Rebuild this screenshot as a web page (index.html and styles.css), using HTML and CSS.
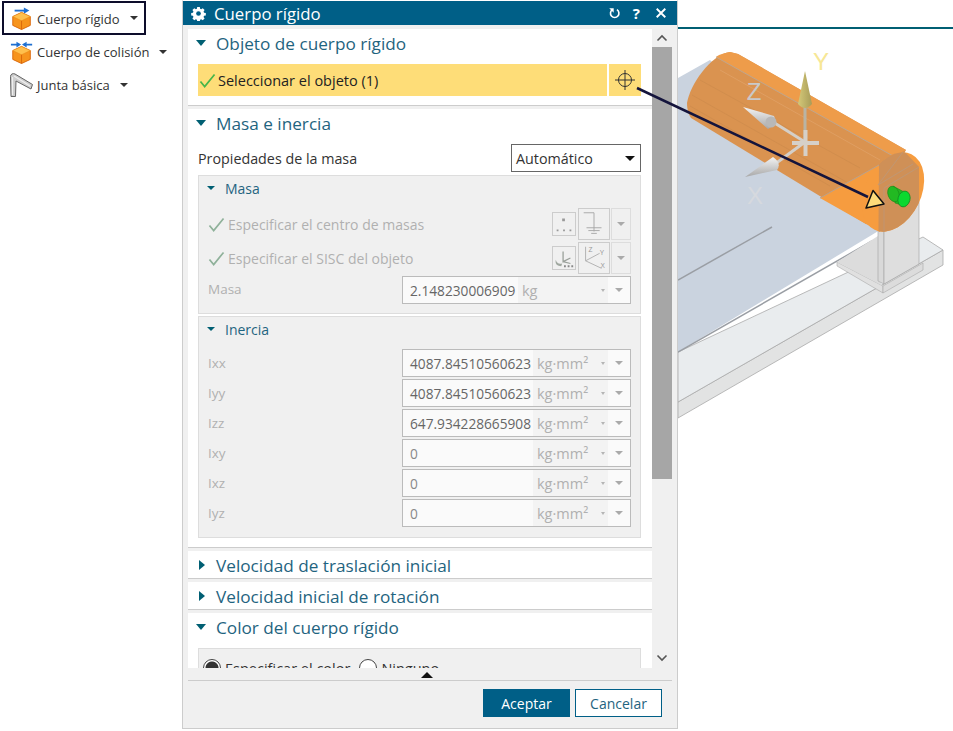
FILE: index.html
```html
<!DOCTYPE html>
<html>
<head>
    <title>Cuerpo rígido</title>
    <link rel="stylesheet" href="styles.css">
</head>
<body>
<div class="page">

    <!-- barra de comandos -->
    <div class="toolbar">
        <div class="tool tool-active">
            <svg class="tool-icon" viewBox="0 0 26 26">
                <path d="M5 5h11" stroke="#1f6fd0" stroke-width="2" fill="none"/>
                <path d="M15 1.5l6 3.500-6 3.500z" fill="#1f6fd0"/>
                <path d="M12.5 7l9.500 4.500v9.500l-9.500 4.500-9.500-4.500v-9.500z" fill="#f7941d" stroke="#d9660a"/>
                <path d="M12.5 7l9.500 4.500-9.500 4.500-9.500-4.500z" fill="#ffc04d" stroke="#e98a17" stroke-width=".6"/>
                <path d="M12.5 16v9.500" stroke="#d9660a"/>
            </svg>
            <span>Cuerpo rígido</span>
            <i class="tool-caret"></i>
        </div>
        <div class="tool">
            <svg class="tool-icon" viewBox="0 0 26 26">
                <path d="M1 5h9M24 5h-9" stroke="#1f6fd0" stroke-width="2" fill="none"/>
                <path d="M7 2l5 3-5 3zM18 2l-5 3 5 3z" fill="#1f6fd0"/>
                <path d="M12.5 7l9.500 4.500v9.500l-9.500 4.500-9.500-4.500v-9.500z" fill="#f7941d" stroke="#d9660a"/>
                <path d="M12.5 7l9.500 4.500-9.500 4.500-9.500-4.500z" fill="#ffc04d" stroke="#e98a17" stroke-width=".6"/>
                <path d="M12.5 16v9.500" stroke="#d9660a"/>
            </svg>
            <span>Cuerpo de colisión</span>
            <i class="tool-caret"></i>
        </div>
        <div class="tool">
            <svg class="tool-icon" viewBox="0 0 24 24">
                <path d="M0.500 3.500c0-2.500 2.500-3.500 4.500-2.500l17.500 10.500-1.500 4.500-15-8-.5 15.500h-4.500z" fill="#cdcdcd" stroke="#666"/>
                <path d="M2.500 4v18M4 3l16 10" stroke="#efefef" stroke-width="1.200"/>
            </svg>
            <span>Junta básica</span>
            <i class="tool-caret"></i>
        </div>
    </div>

    <!-- dialogo -->
    <div class="dialog">
        <div class="title-bar">
            <svg class="gear" viewBox="0 0 16 16">
                <path d="M6.600 1h2.800l.3 1.900 1.200.5 1.600-1.100 2 2-1.100 1.600.5 1.200 1.900.3v2.800l-1.900.3-.5 1.200 1.100 1.600-2 2-1.600-1.100-1.200.5-.3 1.900h-2.800l-.3-1.900-1.200-.5-1.600 1.100-2-2 1.100-1.600-.5-1.200-1.900-.3v-2.800l1.900-.3.5-1.200-1.100-1.600 2-2 1.600 1.100 1.200-.5z" fill="#fff"/>
                <circle cx="8" cy="8" r="2.500" fill="#005f87"/>
            </svg>
            <span class="title-text">Cuerpo rígido</span>
            <svg class="title-btn" viewBox="0 0 16 16">
                <path d="M5.500 3.300a5.200 5.200 0 1 0 5.500 0" fill="none" stroke="#fff" stroke-width="2"/>
                <path d="M1.500 1.500h5.500v5.500z" fill="#fff"/>
            </svg>
            <span class="title-help">?</span>
            <svg class="title-btn title-close" viewBox="0 0 14 14">
                <path d="M2 2l10 10M12 2l-10 10" stroke="#fff" stroke-width="2.200"/>
            </svg>
        </div>

        <div class="dialog-body">
            <div class="panel">

                <div class="section section-first">
                    <div class="section-head"><i class="caret-down"></i>Objeto de cuerpo rígido</div>
                    <div class="pick-row">
                        <div class="pick-label">
                            <svg class="check" viewBox="0 0 18 16"><path d="M1.500 9l4.500 5.500 10.500-13" fill="none" stroke="#46b54a" stroke-width="1.800"/></svg>
                            Seleccionar el objeto (1)
                        </div>
                        <div class="pick-btn">
                            <svg viewBox="0 0 22 22" width="22" height="22">
                                <circle cx="11" cy="11" r="6.500" fill="none" stroke="#333"/>
                                <path d="M11 1v20M1 11h20" stroke="#333"/>
                            </svg>
                        </div>
                    </div>
                </div>

                <div class="section section-mass">
                    <div class="section-head"><i class="caret-down"></i>Masa e inercia</div>
                    <div class="prop-row">
                        <span>Propiedades de la masa</span>
                        <div class="select-box">Automático<i class="caret-black"></i></div>
                    </div>

                    <div class="group group-masa">
                        <div class="group-head"><i class="caret-small"></i>Masa</div>
                        <div class="spec-row">
                            <svg class="check-gray" viewBox="0 0 18 16"><path d="M1.500 9l4.500 5.500 10.500-13" fill="none" stroke="#8fb19a" stroke-width="1.800"/></svg>
                            <span class="spec-text">Especificar el centro de masas</span>
                            <div class="mini-btn">
                                <svg viewBox="0 0 24 24" width="22" height="22"><path d="M10 6h3v3h-3zM4 18h2v2h-2zM11 18h2v2h-2zM18 18h2v2h-2z" fill="#999"/></svg>
                            </div>
                            <div class="big-btn">
                                <svg viewBox="0 0 32 32" width="30" height="30"><path d="M5 4h11v20M8 20h16M10 23h12M13 26h6" fill="none" stroke="#a8a8a8"/></svg>
                            </div>
                            <div class="drop-btn"><i class="caret-gray"></i></div>
                        </div>
                        <div class="spec-row">
                            <svg class="check-gray" viewBox="0 0 18 16"><path d="M1.500 9l4.500 5.500 10.500-13" fill="none" stroke="#8fb19a" stroke-width="1.800"/></svg>
                            <span class="spec-text">Especificar el SISC del objeto</span>
                            <div class="mini-btn">
                                <svg viewBox="0 0 24 24" width="22" height="22"><path d="M11 5v11l8-4M11 16l8 2" fill="none" stroke="#9aa09a" stroke-width="1.400"/><path d="M3 14c1 4 4 5 7 4l-1 3c-4 0-7-2-6-7z" fill="#a0a8a0"/><path d="M12 20h2v2h-2zM16 20h2v2h-2zM20 20h2v2h-2z" fill="#888"/></svg>
                            </div>
                            <div class="big-btn">
                                <svg viewBox="0 0 32 32" width="30" height="30"><path d="M7 4v15l17 8M7 19l15-8" fill="none" stroke="#b0b0b0"/><text x="10" y="10" class="csys-label">Z</text><text x="22" y="13" class="csys-label">Y</text><text x="23" y="27" class="csys-label">X</text></svg>
                            </div>
                            <div class="drop-btn"><i class="caret-gray"></i></div>
                        </div>
                        <div class="field-row field-row-masa">
                            <span class="field-name">Masa</span>
                            <div class="field">
                                <span class="field-value field-value-masa">2.148230006909</span>
                                <span class="field-unit field-unit-masa">kg<i class="caret-tiny"></i></span>
                                <span class="field-drop"><i class="caret-gray"></i></span>
                            </div>
                        </div>
                    </div>

                    <div class="group group-inercia">
                        <div class="group-head"><i class="caret-small"></i>Inercia</div>
                        <div class="field-list">
                            <div class="field-row">
                                <span class="field-name">Ixx</span>
                                <div class="field"><span class="field-value">4087.84510560623</span><span class="field-unit">kg·mm²<i class="caret-tiny"></i></span><span class="field-drop"><i class="caret-gray"></i></span></div>
                            </div>
                            <div class="field-row">
                                <span class="field-name">Iyy</span>
                                <div class="field"><span class="field-value">4087.84510560623</span><span class="field-unit">kg·mm²<i class="caret-tiny"></i></span><span class="field-drop"><i class="caret-gray"></i></span></div>
                            </div>
                            <div class="field-row">
                                <span class="field-name">Izz</span>
                                <div class="field"><span class="field-value">647.934228665908</span><span class="field-unit">kg·mm²<i class="caret-tiny"></i></span><span class="field-drop"><i class="caret-gray"></i></span></div>
                            </div>
                            <div class="field-row">
                                <span class="field-name">Ixy</span>
                                <div class="field"><span class="field-value field-zero">0</span><span class="field-unit">kg·mm²<i class="caret-tiny"></i></span><span class="field-drop"><i class="caret-gray"></i></span></div>
                            </div>
                            <div class="field-row">
                                <span class="field-name">Ixz</span>
                                <div class="field"><span class="field-value field-zero">0</span><span class="field-unit">kg·mm²<i class="caret-tiny"></i></span><span class="field-drop"><i class="caret-gray"></i></span></div>
                            </div>
                            <div class="field-row">
                                <span class="field-name">Iyz</span>
                                <div class="field"><span class="field-value field-zero">0</span><span class="field-unit">kg·mm²<i class="caret-tiny"></i></span><span class="field-drop"><i class="caret-gray"></i></span></div>
                            </div>
                        </div>
                    </div>
                </div>

                <div class="section section-closed">
                    <div class="section-head"><i class="caret-right"></i>Velocidad de traslación inicial</div>
                </div>
                <div class="section section-closed">
                    <div class="section-head"><i class="caret-right"></i>Velocidad inicial de rotación</div>
                </div>
                <div class="section section-color">
                    <div class="section-head"><i class="caret-down"></i>Color del cuerpo rígido</div>
                    <div class="color-box">
                        <span class="radio radio-on"></span><span>Especificar el color</span>
                        <span class="radio"></span><span>Ninguno</span>
                    </div>
                </div>
            </div>

            <div class="scrollbar">
                <svg class="scroll-arrow" viewBox="0 0 12 8"><path d="M1.500 6.500l4.500-4.500 4.500 4.500" fill="none" stroke="#555" stroke-width="1.600"/></svg>
                <div class="scroll-track">
                    <div class="scroll-thumb"></div>
                </div>
                <svg class="scroll-arrow" viewBox="0 0 12 8"><path d="M1.500 1.500l4.500 4.500 4.500-4.500" fill="none" stroke="#555" stroke-width="1.600"/></svg>
            </div>
        </div>

        <div class="collapse-row"><i class="caret-up"></i></div>
        <div class="dialog-foot">
            <button type="button" class="btn btn-ok">Aceptar</button>
            <button type="button" class="btn btn-cancel">Cancelar</button>
        </div>
    </div>

    <!-- vista del modelo -->
    <div class="viewport">
        <svg class="scene" viewBox="678 0 275 731" width="275" height="731">
            <rect x="678" y="27" width="275" height="2" fill="#005f73"/>

            <!-- placa base -->
            <path d="M678 402L943 250V265L678 418Z" fill="#e2e3e3" stroke="#aaa" stroke-width=".8"/>
            <path d="M678 352L923 237L943 250L678 402Z" fill="#e9ecee" stroke="#aaa" stroke-width=".8"/>
            <path d="M837 262L883 286L883 293L837 266Z" fill="#e0e0e0" stroke="#aaa" stroke-width=".6"/>
            <path d="M883 286L923 263V270L883 293Z" fill="#dcdcdc" stroke="#aaa" stroke-width=".6"/>

            <!-- placa azul -->
            <path d="M678 78L710 60L880 230L678 352Z" fill="#cad3df"/>
            <path d="M678 352L872 241" stroke="#9a9ea4" stroke-width="1.500"/>
            <path d="M678 280L772 227" stroke="#9a9ea4" stroke-width="1.500"/>

            <!-- pedestal -->
            <path d="M837 262L878 236V280L883 286L837 262Z" fill="#dcdcdc"/>
            <path d="M878 185L884 188V284L878 281Z" fill="#d9d9d9" stroke="#aaa" stroke-width=".7"/>
            <path d="M884 188L919 167V264L884 284Z" fill="#dedede" stroke="#aaa" stroke-width=".7"/>

            <!-- cilindro -->
            <defs>
                <clipPath id="clipEnd"><ellipse cx="893" cy="192" rx="28" ry="42" transform="rotate(26 893 192)"/></clipPath>
            </defs>
            <path d="M730 52C710 55 690 85 687 103C687 110 689 115 691 118L866 224L906 150L738 54Z" fill="#da9350"/>
            <path d="M730 52C724 53 718 55 716 57L893 156L906 150L738 54Z" fill="#ee9c4a"/>
            <path d="M716 57L893 156" stroke="#bfa68e" stroke-width="1"/>
            <path d="M700 80L860 168M692 95L850 184M690 106L830 186" stroke="#cb8a4c" stroke-width=".6"/>
            <path d="M720 70L880 160" stroke="#e2a66e" stroke-width=".6"/>
            <path d="M820 198L879 165L885 200L880 232L866 224Z" fill="#f69c3f"/>
            <ellipse cx="893" cy="192" rx="28" ry="42" transform="rotate(26 893 192)" fill="#f69c3f"/>
            <path d="M855 178L879 165L878 281L884 284L919 264V167L903 150L860 140Z" fill="#cf9057" clip-path="url(#clipEnd)"/>
            <path d="M820 198L879 165" stroke="#b9a28e" stroke-width="1"/>
            <path d="M878 185L903 152M884 188V232M884 188L919 167M878 185L913 164" stroke="#b99a80" stroke-width=".7" fill="none"/>

            <!-- pasador verde -->
            <path d="M893 186L904 192L906 206L895 203Z" fill="#22b922" stroke="#1a8a1a" stroke-width=".6"/>
            <ellipse cx="893.5" cy="194" rx="5.500" ry="8" transform="rotate(-20 893.5 194)" fill="#22b922" stroke="#1a8a1a" stroke-width=".6"/>
            <ellipse cx="904" cy="199" rx="6" ry="8" transform="rotate(15 904 199)" fill="#0bd92f" stroke="#178a22" stroke-width=".8"/>

            <!-- triada -->
            <defs>
                <linearGradient id="coneGold" x1="0" x2="1" y1="0" y2="0"><stop offset="0" stop-color="#d4c878"/><stop offset="1" stop-color="#a89c58"/></linearGradient>
                <linearGradient id="coneWhite" x1="0" x2="0" y1="0" y2="1"><stop offset="0" stop-color="#f4f4f4"/><stop offset="1" stop-color="#a8a8a8"/></linearGradient>
            </defs>
            <path d="M805 142V106" stroke="#b9b4a4" stroke-width="3"/>
            <path d="M805 142L773 122M805 142L775 164" stroke="#d4cfc8" stroke-width="3"/>
            <path d="M792 143H819" stroke="#d6d0c8" stroke-width="4"/>
            <path d="M805.5 130V156" stroke="#d6d0c8" stroke-width="4"/>
            <path d="M805 71L812 104Q805 112 798 104Z" fill="url(#coneGold)"/>
            <path d="M743 107L774 116Q778 124 768 129Z" fill="url(#coneWhite)"/>
            <circle cx="771" cy="122" r="5.500" fill="#b8b8b8"/>
            <path d="M745 177L773 157Q782 163 777 170Z" fill="url(#coneWhite)"/>
            <text x="821" y="70" class="axis-label axis-y">Y</text>
            <text x="754" y="100" class="axis-label axis-z">Z</text>
            <text x="755" y="204" class="axis-label axis-x">X</text>
        </svg>
    </div>
</div>

<!-- linea de seleccion, pasa por encima del dialogo -->
<svg class="leader" viewBox="0 0 953 731" width="953" height="731">
    <path d="M637 88L868 197" stroke="#14143c" stroke-width="2.500"/>
    <path d="M873 190.500L884 204L866 208Z" fill="#fedb7a" stroke="#111" stroke-width="1.500" stroke-linejoin="round"/>
</svg>
</body>
</html>
```

FILE: styles.css
```css
body {
    margin: 0;
    background-color: #fff;
    font-family: "Open Sans", "Noto Sans", sans-serif;
    overflow: hidden;
}

.page {
    display: flex;
    width: 953px;
    height: 731px;
    position: relative;
}

/* barra de comandos */
.toolbar {
    width: 182px;
    flex: none;
    display: flex;
    flex-direction: column;
    padding: 1px 0 0 2px;
    box-sizing: border-box;
}

.tool {
    display: flex;
    align-items: center;
    height: 33px;
    font-size: 13px;
    color: #333;
    padding-left: 8px;
    box-sizing: border-box;
    white-space: nowrap;
}

.tool-active {
    width: 144px;
    height: 34px;
    border: 2px solid #0d0d2b;
    padding-left: 6px;
}

.tool-active span {
    padding-top: 2px;
}

.tool-icon {
    width: 24px;
    height: 24px;
    margin-right: 3px;
    flex: none;
}

.tool-caret {
    width: 0;
    height: 0;
    margin-left: 10px;
    border-left: 4px solid transparent;
    border-right: 4px solid transparent;
    border-top: 4px solid #333;
}

/* dialogo */
.dialog {
    width: 496px;
    height: 729px;
    flex: none;
    background-color: #f0f0f0;
    border: 1px solid #ccc;
    border-top: 1px solid #fff;
    box-sizing: border-box;
    display: flex;
    flex-direction: column;
}

.title-bar {
    height: 24px;
    flex: none;
    background-color: #005f87;
    color: #fff;
    display: flex;
    align-items: center;
    padding: 0 10px 0 8px;
}

.gear {
    width: 15px;
    height: 15px;
    flex: none;
}

.title-text {
    font-size: 16.8px;
    margin-left: 8px;
    flex: 1;
}

.title-btn {
    width: 13px;
    height: 13px;
    flex: none;
}

.title-help {
    font-size: 15px;
    font-weight: bold;
    margin: 0 15px 0 12px;
}

.title-close {
    width: 12px;
    height: 12px;
}

.dialog-body {
    display: flex;
    height: 639px;
    flex: none;
    padding: 4px 5px 0 5px;
    overflow: hidden;
}

.panel {
    width: 464px;
    flex: none;
    overflow: hidden;
}

.section {
    background-color: #fff;
    border-bottom: 1px solid #ccc;
    margin-bottom: 3px;
    padding: 0 11px 0 10px;
    box-sizing: border-box;
}

.section-first {
    height: 77px;
}

.section-mass {
    height: 439px;
}

.section-closed {
    height: 28px;
}

.section-color {
    height: 60px;
    border-bottom: 0;
}

.section-head {
    display: flex;
    align-items: center;
    height: 30px;
    padding-bottom: 2px;
    box-sizing: border-box;
    font-size: 17.2px;
    color: #1f6480;
    white-space: nowrap;
}

.caret-down,
.caret-right {
    width: 0;
    height: 0;
    flex: none;
}

.caret-down {
    border-left: 5.5px solid transparent;
    border-right: 5.5px solid transparent;
    border-top: 6px solid #005f73;
    margin-left: -2px;
    margin-right: 10px;
}

.caret-right {
    border-top: 5.5px solid transparent;
    border-bottom: 5.5px solid transparent;
    border-left: 6px solid #005f73;
    margin-left: 1px;
    margin-right: 11px;
}

/* fila amarilla de seleccion */
.pick-row {
    display: flex;
    gap: 2px;
    height: 32px;
    margin-top: 5px;
}

.pick-label {
    flex: 1;
    background-color: #fedd78;
    display: flex;
    align-items: center;
    font-size: 14.5px;
    color: #222;
}

.check {
    width: 17px;
    height: 15px;
    margin: 0 2px 0 1px;
}

.pick-btn {
    width: 32px;
    background-color: #fedd78;
    display: flex;
    align-items: center;
    justify-content: center;
}

.prop-row {
    display: flex;
    justify-content: space-between;
    align-items: center;
    height: 28px;
    margin-top: 5px;
    font-size: 14.3px;
    color: #333;
}

.select-box {
    width: 130px;
    height: 28px;
    border: 1px solid #666;
    box-sizing: border-box;
    display: flex;
    align-items: center;
    justify-content: space-between;
    padding: 0 5px 0 4px;
    font-size: 14.3px;
    color: #333;
}

.caret-black {
    width: 0;
    height: 0;
    border-left: 5px solid transparent;
    border-right: 5px solid transparent;
    border-top: 5px solid #111;
}

/* grupos deshabilitados */
.group {
    background-color: #f0f0f0;
    border: 1px solid #ddd;
    box-sizing: border-box;
    padding: 0 9px;
}

.group-masa {
    height: 139px;
    margin-top: 3px;
}

.group-inercia {
    height: 222px;
    margin-top: 2px;
}

.group-head {
    display: flex;
    align-items: center;
    height: 24px;
    font-size: 14px;
    color: #1f6480;
    margin-bottom: 8px;
}

.caret-small {
    width: 0;
    height: 0;
    margin-right: 10px;
    margin-left: -1px;
    border-left: 4.5px solid transparent;
    border-right: 4.5px solid transparent;
    border-top: 4.5px solid #005f73;
}

.spec-row {
    display: flex;
    align-items: center;
    height: 32px;
    margin-bottom: 2px;
    font-size: 14px;
    color: #b0b0b0;
}

.check-gray {
    width: 17px;
    height: 15px;
    margin-right: 3px;
    flex: none;
}

.spec-text {
    flex: 1;
    white-space: nowrap;
}

.mini-btn {
    width: 24px;
    height: 24px;
    border: 1px solid #ccc;
    box-sizing: border-box;
    display: flex;
    align-items: center;
    justify-content: center;
    margin-right: 2px;
}

.big-btn {
    width: 32px;
    height: 32px;
    border: 1px solid #ccc;
    box-sizing: border-box;
    display: flex;
    align-items: center;
    justify-content: center;
    margin-right: 1px;
}

.drop-btn {
    width: 20px;
    height: 32px;
    border: 1px solid #ddd;
    box-sizing: border-box;
    display: flex;
    align-items: center;
    justify-content: center;
}

.caret-gray {
    width: 0;
    height: 0;
    border-left: 4.5px solid transparent;
    border-right: 4.5px solid transparent;
    border-top: 4.5px solid #aaa;
}

.caret-tiny {
    width: 0;
    height: 0;
    margin-left: auto;
    margin-right: 3px;
    border-left: 2.5px solid transparent;
    border-right: 2.5px solid transparent;
    border-top: 3px solid #b5b5b5;
}

.field-list {
    display: flex;
    flex-direction: column;
    gap: 2px;
}

.field-row {
    display: flex;
    justify-content: space-between;
    align-items: center;
    height: 28px;
}

.field-row-masa {
    margin-top: 2px;
}

.field-row-masa .field-name {
    margin-top: -3px;
}

.field-name {
    font-size: 13.5px;
    color: #b0b0b0;
}

.field {
    width: 229px;
    height: 28px;
    box-sizing: border-box;
    border: 1px solid #bbb;
    background-color: #fafafa;
    display: flex;
    align-items: center;
    font-size: 13.7px;
    overflow: hidden;
}

.field-value {
    width: 130px;
    flex: none;
    padding-left: 7px;
    box-sizing: border-box;
    color: #666;
    white-space: nowrap;
}

.field-value-masa {
    width: 115px;
}

.field-zero {
    color: #888;
}

.field-unit {
    width: 75px;
    height: 26px;
    flex: none;
    box-sizing: border-box;
    padding: 0 0 0 4px;
    background-color: #f3f3f3;
    color: #b0b0b0;
    font-size: 14.5px;
    display: flex;
    align-items: center;
    white-space: nowrap;
}

.field-unit-masa {
    width: 90px;
}

.field-drop {
    flex: 1;
    display: flex;
    align-items: center;
    justify-content: center;
}

/* seccion de color */
.color-box {
    height: 40px;
    margin-top: 5px;
    background-color: #f0f0f0;
    border: 1px solid #ddd;
    box-sizing: border-box;
    display: flex;
    align-items: center;
    gap: 4px;
    padding: 0 0 0 4px;
    font-size: 14.5px;
    color: #333;
}

.radio {
    width: 18px;
    height: 18px;
    box-sizing: border-box;
    border: 1px solid #444;
    border-radius: 50%;
    background-color: #fff;
    margin-left: 5px;
}

.radio-on {
    margin-left: 0;
    background: radial-gradient(circle, #333 0, #333 6px, #fff 7px);
}

/* barra de desplazamiento */
.scrollbar {
    width: 20px;
    flex: none;
    display: flex;
    flex-direction: column;
    align-items: center;
}

.scroll-arrow {
    width: 12px;
    height: 8px;
    margin: 5px 0 6px;
    flex: none;
}

.scroll-track {
    flex: 1;
    width: 100%;
}

.scroll-thumb {
    height: 432px;
    margin-top: -1px;
    background-color: #a6a6a6;
}

.collapse-row {
    height: 13px;
    flex: none;
    margin: 0 5px;
    border-bottom: 1px solid #ccc;
    display: flex;
    justify-content: center;
    padding: 4px 6px 0 0;
    box-sizing: border-box;
}

.caret-up {
    width: 0;
    height: 0;
    border-left: 6px solid transparent;
    border-right: 6px solid transparent;
    border-bottom: 6px solid #111;
}

.dialog-foot {
    display: flex;
    justify-content: flex-end;
    gap: 5px;
    padding: 8px 15px 0 0;
}

.btn {
    width: 87px;
    height: 28px;
    box-sizing: border-box;
    font-family: inherit;
    font-size: 14px;
    border: 1px solid #005f87;
    padding: 0;
}

.btn-ok {
    background-color: #005f87;
    color: #fff;
}

.btn-cancel {
    background-color: #fff;
    color: #1f6480;
}

/* vista */
.viewport {
    flex: 1;
    min-width: 0;
}

.scene {
    display: block;
}

.axis-label {
    font-family: "Liberation Sans", sans-serif;
    font-size: 24px;
    text-anchor: middle;
}

.axis-y {
    fill: #f7e796;
}

.axis-z {
    fill: #c9c9c9;
}

.axis-x {
    fill: #d6d9de;
}

.csys-label {
    font-family: "Liberation Sans", sans-serif;
    font-size: 7px;
    fill: #999;
}

.leader {
    position: absolute;
    left: 0;
    top: 0;
    pointer-events: none;
}
```
